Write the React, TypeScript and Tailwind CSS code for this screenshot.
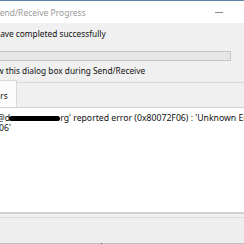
import React from "react";

const font = { fontFamily: '"Noto Sans", "Open Sans", sans-serif' };

export default function App() {
  return (
    <div
      className="w-[244px] h-[244px] overflow-hidden bg-[#f0f0f0] flex flex-col text-[8.3px] leading-[10px] text-[#111]"
      style={font}
    >
      <div className="h-[1px] bg-[#5b83a8] shrink-0" />
      {/* title bar */}
      <div className="h-[22px] shrink-0 bg-white flex items-center justify-between pt-[2px]">
        <span className="-ml-[5px] text-[8.5px] text-[#9a9a9a] whitespace-nowrap">Send/Receive Progress</span>
        <div className="w-[8px] h-[1px] bg-[#8c8c8c] mr-[21px] -mt-[2px]" />
      </div>

      {/* status text */}
      <div className="mt-[6px] h-[10px] shrink-0 -ml-[5px] whitespace-nowrap">have completed successfully</div>

      {/* progress */}
      <div className="mt-[12px] h-[10px] shrink-0 w-[232px] -ml-[1px] border border-[#c6c6c6] bg-[#e6e6e6]" />

      {/* checkbox */}
      <div className="mt-[5px] h-[10px] shrink-0 -ml-[17px] whitespace-nowrap">show this dialog box during Send/Receive</div>

      {/* tabs */}
      <div className="mt-[4px] h-[27px] shrink-0 flex">
        <div className="w-[17px] border-t border-r border-[#d9d9d9] bg-[#fcfcfc] flex items-center pt-[3px] overflow-hidden">
          <span className="-ml-[16px] whitespace-nowrap">Errors</span>
        </div>
        <div className="flex-1 mt-[2px] border-t border-[#d9d9d9] bg-[#f0f0f0]" />
      </div>

      {/* error list */}
      <div className="h-[107px] shrink-0 bg-white border-t border-b-2 border-[#d2d2d6] pt-[5px] text-[8.7px]">
        <div className="whitespace-nowrap flex items-center h-[10px]">
          <span className="-ml-[3px]">@d</span>
          <span className="inline-block w-[51px] h-[5px] bg-black rounded-full -ml-[1px] shrink-0" />
          <span>rg' reported error (0x80072F06) : 'Unknown Error 0x80072F06'</span>
        </div>
        <div className="-ml-[1px] whitespace-nowrap h-[10px]">06'</div>
      </div>

      {/* footer */}
      <div className="mt-[3px] h-[27px] shrink-0 border-t border-[#dcdcdc] bg-[#eeeeee] border-b border-b-[#c0c0c0] relative">
        <div className="absolute left-[101px] bottom-[-1px] w-[1px] h-[1px] bg-[#555]" />
      </div>
    </div>
  );
}
